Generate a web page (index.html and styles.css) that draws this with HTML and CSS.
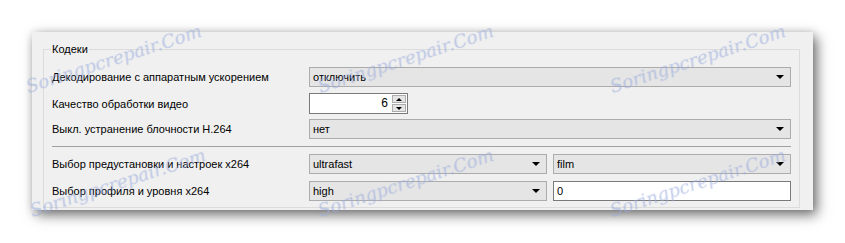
FILE: index.html
```html
<!DOCTYPE html>
<html lang="ru">
<head>
<meta charset="utf-8">
<link rel="stylesheet" href="styles.css">
</head>
<body>
<div class="stage">
  <div class="panel">
    <div class="group">
      <div class="legend">Кодеки</div>
      <div class="rows">
        <div class="row">
          <div class="label">Декодирование с аппаратным ускорением</div>
          <div class="combo wide"><span>отключить</span><i class="arrow"></i></div>
        </div>
        <div class="row r2">
          <div class="label">Качество обработки видео</div>
          <div class="spin">
            <span class="spin-val">6</span>
            <div class="spin-btns">
              <div class="sb up"><i></i></div>
              <div class="sb down"><i></i></div>
            </div>
          </div>
        </div>
        <div class="row">
          <div class="label">Выкл. устранение блочности H.264</div>
          <div class="combo wide"><span>нет</span><i class="arrow"></i></div>
        </div>
        <div class="sep"></div>
        <div class="row r4">
          <div class="label">Выбор предустановки и настроек x264</div>
          <div class="pair">
            <div class="combo"><span>ultrafast</span><i class="arrow"></i></div>
            <div class="combo"><span>film</span><i class="arrow"></i></div>
          </div>
        </div>
        <div class="row r5">
          <div class="label">Выбор профиля и уровня x264</div>
          <div class="pair">
            <div class="combo"><span>high</span><i class="arrow"></i></div>
            <div class="field">0</div>
          </div>
        </div>
      </div>
    </div>
  </div>
  <div class="wm w1">Soringpcrepair.Com</div>
  <div class="wm w2">Soringpcrepair.Com</div>
  <div class="wm w3">Soringpcrepair.Com</div>
  <div class="wm w4">Soringpcrepair.Com</div>
  <div class="wm w5">Soringpcrepair.Com</div>
  <div class="wm w6">Soringpcrepair.Com</div>
</div>
</body>
</html>
```

FILE: styles.css
```css
html, body {
  margin: 0;
  padding: 0;
  background: #ffffff;
}
body {
  font-family: "Liberation Sans", Arial, sans-serif;
  font-size: 11px;
  color: #000;
}
.stage {
  position: relative;
  width: 845px;
  height: 243px;
  padding: 32px 0 0 32px;
  box-sizing: border-box;
  overflow: hidden;
}
.panel {
  width: 781px;
  height: 178px;
  background: #f0f0f0;
  box-shadow: 4px 5px 12px rgba(0,0,0,0.55), 0 0 8px rgba(0,0,0,0.12);
  padding: 17px 0 0 11px;
  box-sizing: border-box;
}
.group {
  position: relative;
  width: 757px;
  height: 159px;
  border: 1px solid #dcdcdc;
  box-sizing: border-box;
  padding: 17px 8px 0 8px;
}
.legend {
  position: absolute;
  left: 7px;
  top: -8px;
  padding: 0 1px;
  background: #f0f0f0;
  line-height: 14px;
}
.rows {
  display: flex;
  flex-direction: column;
}
.row {
  display: grid;
  grid-template-columns: 257px 482px;
  align-items: center;
  height: 20px;
  margin-bottom: 6px;
}
.row.r2 { height: 21px; margin-bottom: 5px; }
.row.r4 { margin-bottom: 7px; }
.row.r5 { margin-bottom: 0; }
.label {
  white-space: nowrap;
  line-height: 20px;
}
.sep {
  height: 1px;
  background: #a0a0a0;
  margin: 1px 0 7px 0;
}
.combo {
  position: relative;
  height: 20px;
  background: #e5e5e5;
  border: 1px solid #acacac;
  box-sizing: border-box;
  display: flex;
  align-items: center;
  padding-left: 3px;
}
.combo span { line-height: 18px; }
.arrow {
  position: absolute;
  right: 6px;
  top: 7px;
  width: 0;
  height: 0;
  border-left: 4px solid transparent;
  border-right: 4px solid transparent;
  border-top: 4px solid #000;
}
.pair {
  display: grid;
  grid-template-columns: 238px 238px;
  column-gap: 6px;
}
.field {
  height: 20px;
  background: #fff;
  border: 1px solid #7a7a7a;
  box-sizing: border-box;
  padding-left: 3px;
  line-height: 18px;
}
.spin {
  width: 99px;
  height: 21px;
  background: #fff;
  border: 1px solid #7a7a7a;
  box-sizing: border-box;
  display: flex;
  justify-content: flex-end;
  align-items: center;
}
.spin-val {
  line-height: 19px;
  padding-right: 4px;
  font-size: 12px;
}
.spin-btns {
  width: 15px;
  height: 19px;
  display: flex;
  flex-direction: column;
  gap: 1px;
  padding: 1px 1px 1px 0;
  box-sizing: border-box;
}
.sb {
  flex: 1;
  background: #e5e5e5;
  border: 1px solid #acacac;
  position: relative;
}
.sb i {
  position: absolute;
  left: 3px;
  top: 2px;
  width: 0;
  height: 0;
  border-left: 3px solid transparent;
  border-right: 3px solid transparent;
}
.sb.up i { border-bottom: 3px solid #000; }
.sb.down i { border-top: 3px solid #000; top: 2px; }
.wm {
  position: absolute;
  font-family: "DejaVu Serif", serif;
  font-style: italic;
  font-size: 18px;
  color: rgba(175, 190, 230, 0.35);
  text-shadow: 0 0 1px rgba(130,150,210,0.35);
  transform: rotate(-18deg);
  transform-origin: center;
  white-space: nowrap;
  pointer-events: none;
}
.w1 { left: 22px; top: 48px; }
.w2 { left: 314px; top: 48px; }
.w3 { left: 606px; top: 48px; }
.w4 { left: 26px; top: 172px; }
.w5 { left: 314px; top: 172px; }
.w6 { left: 606px; top: 172px; }
```
